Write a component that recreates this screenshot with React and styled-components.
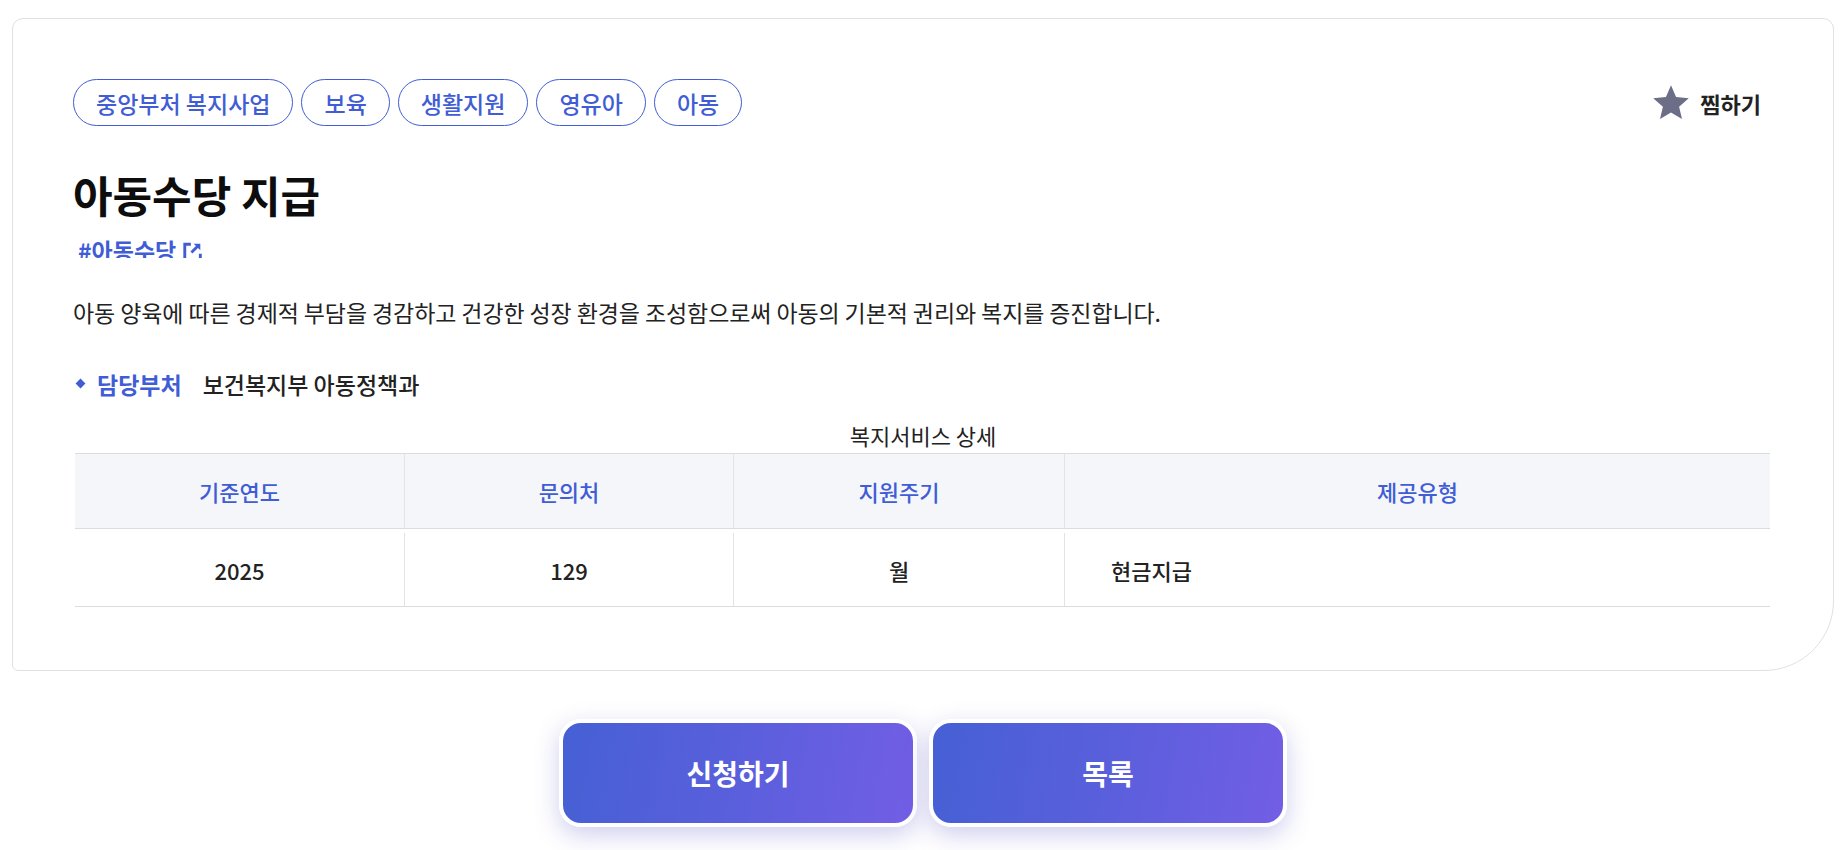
import React from "react";
import styled, { createGlobalStyle } from "styled-components";

const GlobalStyle = createGlobalStyle`
  * { box-sizing: border-box; }
  html, body { margin: 0; padding: 0; background: #ffffff; }
  body {
    font-family: "Noto Sans CJK KR", "Noto Sans", sans-serif;
    color: #222222;
  }
`;

const BLUE = "#405dd6";

const Page = styled.div`
  padding: 18px 12px 40px 12px;
`;

const Card = styled.section`
  border: 1px solid #e1e1e1;
  border-radius: 11px 11px 70px 6px;
  padding: 60px 60px 63px 60px;
  background: #fff;
`;

const TopRow = styled.div`
  display: flex;
  align-items: center;
  justify-content: space-between;
`;

const Tags = styled.ul`
  display: flex;
  gap: 8px;
  margin: 0;
  padding: 0;
  list-style: none;
`;

const Tag = styled.li`
  height: 47px;
  display: flex;
  align-items: center;
  padding: 0 22px;
  border: 1px solid ${BLUE};
  border-radius: 24px;
  color: ${BLUE};
  font-size: 23px;
  font-weight: 500;
  white-space: nowrap;
`;

const FavButton = styled.button`
  display: flex;
  align-items: center;
  gap: 9px;
  margin-right: 12px;
  padding: 0;
  border: 0;
  background: none;
  font-family: inherit;
  font-size: 22px;
  font-weight: 700;
  color: #222;
  cursor: pointer;
`;

const Title = styled.h1`
  margin: 42px 0 0 0;
  font-size: 43px;
  line-height: 52px;
  font-weight: 700;
  color: #0d0d0d;
`;

const HashLink = styled.a`
  display: inline-flex;
  align-items: flex-start;
  gap: 6px;
  height: 19px;
  margin: 19px 0 0 5px;
  overflow: hidden;
  font-size: 23px;
  line-height: 22px;
  font-weight: 700;
  color: ${BLUE};
  text-decoration: none;
  svg { margin-top: 3px; flex: none; }
`;

const Description = styled.p`
  margin: 32px 0 0 0;
  font-size: 23px;
  line-height: 34.5px;
  letter-spacing: -0.1px;
  font-weight: 400;
  color: #222;
`;

const InfoRow = styled.div`
  display: flex;
  align-items: center;
  margin-top: 37px;
  font-size: 23px;
  line-height: 34.5px;
`;

const Diamond = styled.span`
  width: 7px;
  height: 7px;
  margin: 0 13px 0 4px;
  background: ${BLUE};
  transform: rotate(45deg);
  flex: none;
`;

const InfoLabel = styled.span`
  color: ${BLUE};
  font-weight: 700;
  margin-right: 21px;
`;

const InfoValue = styled.span`
  color: #222;
  font-weight: 500;
`;

const Caption = styled.div`
  margin-top: 18px;
  text-align: center;
  font-size: 22px;
  line-height: 33px;
  color: #222;
`;

const Table = styled.div`
  margin: 1px 3px 0 2px;
  border-top: 1px solid #dcdcdc;
  border-bottom: 1px solid #dcdcdc;
`;

const Row = styled.div`
  display: grid;
  grid-template-columns: 329px 329px 331px 1fr;
  ${(p) =>
    p.$head
      ? `background: #f5f6fa; border-bottom: 1px solid #dcdcdc; height: 75px;`
      : `height: 77px; padding-top: 4px;`}
`;

const Cell = styled.div`
  display: flex;
  align-items: center;
  justify-content: ${(p) => (p.$left ? "flex-start" : "center")};
  padding-left: ${(p) => (p.$left ? "46px" : "0")};
  font-size: 22px;
  font-weight: 500;
  color: ${(p) => (p.$head ? BLUE : "#222")};
  & + & { border-left: 1px solid #e3e3e3; }
`;

const Buttons = styled.div`
  display: flex;
  justify-content: center;
  gap: 12px;
  margin-top: 48px;
`;

const ActionButton = styled.button`
  width: 358px;
  height: 108px;
  border: 4px solid #ffffff;
  border-radius: 22px;
  background: linear-gradient(100deg, #4660d4 0%, #5a5fdc 50%, #725ee5 100%);
  box-shadow: 0 8px 24px rgba(96, 92, 200, 0.3);
  color: #fff;
  font-family: inherit;
  font-size: 28px;
  font-weight: 700;
  cursor: pointer;
`;

const StarIcon = () => (
  <svg width="40" height="38" viewBox="0 0 24 23" aria-hidden="true">
    <path
      d="M12 0.8l3.05 7.1 7.7.7-5.85 5.1 1.75 7.55L12 17.3l-6.65 3.95 1.75-7.55L1.25 8.6l7.7-.7z"
      fill="#6c6d86"
    />
  </svg>
);

const LinkIcon = () => (
  <svg width="20" height="20" viewBox="0 0 18 18" aria-hidden="true">
    <path d="M8 2H2.5v14h14V10.5" fill="none" stroke={BLUE} strokeWidth="2.6" />
    <path d="M8.5 9.5L15 3" stroke={BLUE} strokeWidth="2.6" fill="none" />
    <path d="M10.5 1.5h6v6z" fill={BLUE} />
  </svg>
);

const tags = ["중앙부처 복지사업", "보육", "생활지원", "영유아", "아동"];

export default function App() {
  return (
    <>
      <GlobalStyle />
      <Page>
        <Card>
          <TopRow>
            <Tags>
              {tags.map((t) => (
                <Tag key={t}>{t}</Tag>
              ))}
            </Tags>
            <FavButton type="button">
              <StarIcon />
              찜하기
            </FavButton>
          </TopRow>
          <Title>아동수당 지급</Title>
          <HashLink href="#">
            #아동수당
            <LinkIcon />
          </HashLink>
          <Description>
            아동 양육에 따른 경제적 부담을 경감하고 건강한 성장 환경을 조성함으로써 아동의 기본적 권리와 복지를 증진합니다.
          </Description>
          <InfoRow>
            <Diamond />
            <InfoLabel>담당부처</InfoLabel>
            <InfoValue>보건복지부 아동정책과</InfoValue>
          </InfoRow>
          <Caption>복지서비스 상세</Caption>
          <Table>
            <Row $head>
              <Cell $head>기준연도</Cell>
              <Cell $head>문의처</Cell>
              <Cell $head>지원주기</Cell>
              <Cell $head>제공유형</Cell>
            </Row>
            <Row>
              <Cell>2025</Cell>
              <Cell>129</Cell>
              <Cell>월</Cell>
              <Cell $left>현금지급</Cell>
            </Row>
          </Table>
        </Card>
        <Buttons>
          <ActionButton type="button">신청하기</ActionButton>
          <ActionButton type="button">목록</ActionButton>
        </Buttons>
      </Page>
    </>
  );
}
